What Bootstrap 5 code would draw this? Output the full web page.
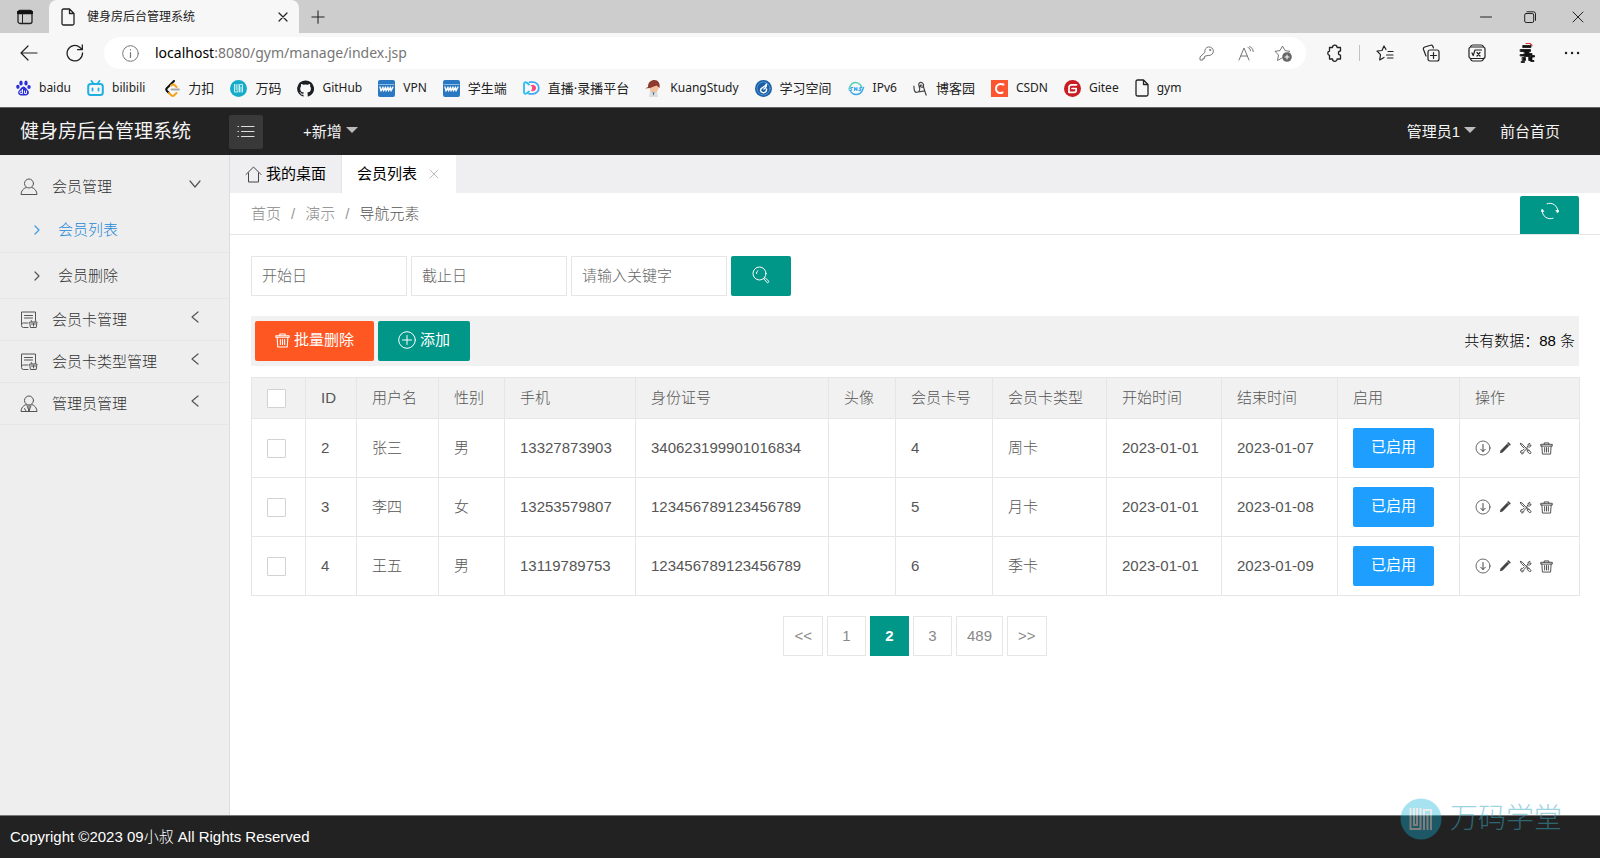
<!DOCTYPE html>
<html lang="zh-CN">
<head>
<meta charset="utf-8">
<meta name="viewport" content="width=device-width, initial-scale=1">
<title>健身房后台管理系统</title>
<link href="https://cdn.jsdelivr.net/npm/bootstrap@5.3.0/dist/css/bootstrap.min.css" rel="stylesheet">
<style>
:root { --teal: #009688; --ink: #222; --line: #e6e6e6; }
body { font: 15px/24px "Liberation Sans", "Noto Sans CJK SC", sans-serif; font-weight: 300; color: #333; background: #fff; }
a { text-decoration: none; color: inherit; }
svg { display: block; flex: none; fill: none; stroke: currentColor; stroke-linecap: round; stroke-linejoin: round; }
button { font-weight: inherit; }
.plain { background: none; border: 0; padding: 0; color: inherit; }

/* browser frame */
.frame { background: #f7f7f7; font-family: "Noto Sans", "Noto Sans CJK SC", sans-serif; font-weight: 400; color: #222; }
.tabstrip { background: #cdcdcd; height: 33px; }
.tabstrip .corner { width: 49px; border-bottom-right-radius: 6px; }
.page-tab { width: 250px; background: #f7f7f7; border-radius: 8px 8px 0 0; font-size: 12px; padding: 0 10px 0 12px; }
.tools { height: 40px; }
.address { background: #fff; border-radius: 16px; height: 32px; margin-left: 20px; padding: 0 14px 0 18px; font-size: 14px; color: #767676; }
.marks { height: 34px; font-size: 12px; padding: 0 16px 4px; gap: 16px; }
.marks a { display: flex; align-items: center; gap: 8px; white-space: nowrap; }
.marks .zh { font-size: 13px; }

/* application bar */
.topbar { background: var(--ink); color: #f4f4f4; height: 48px; border-top: 1px solid #666; font-weight: 400; }
.brand { width: 229px; padding-left: 20px; font-size: 19px; }
.fold { width: 34px; height: 34px; background: #393939; border-radius: 2px; color: #ddd; }
.tri { border: 6px solid transparent; border-top-color: #bbb; border-bottom: 0; margin-bottom: 4px; }

/* side menu */
.side { width: 230px; background: #eee; border-right: 1px solid #ddd; padding-top: 11px; }
.side a { display: flex; align-items: center; height: 42px; padding: 0 30px 0 20px; border-bottom: 1px solid var(--line); }
.side a.open { border: 0; padding-right: 28px; }
.side a.sub { height: 46px; padding-left: 34px; gap: 14px; }
.side a.sub.active { color: #1e88d6; height: 45px; }
.side svg { color: #555; }
.side .active svg { color: #3f9bdc; }
.side .name { margin-left: 14px; }
.side .arrow { margin-left: auto; margin-bottom: 6px; }

/* work area */
.tabs { background: #efeef0; height: 38px; color: #000; font-weight: 400; }
.tabs a { display: flex; align-items: center; padding: 0 15px; border-right: 1px solid #e4e4e6; }
.tabs a.active { background: #fff; border: 0; padding: 0 17px 0 15px; gap: 12px; }
.crumbs { height: 42px; border-bottom: 1px solid #e5e5e5; padding: 0 21px; color: #888; }
.breadcrumb { --bs-breadcrumb-divider-color: #999; --bs-breadcrumb-item-padding-x: 10px; --bs-breadcrumb-item-active-color: #555; }
.crumbs .btn { width: 59px; height: 38px; margin-top: 3px; border-radius: 2px 2px 0 0; padding: 0 0 8px; }
.btn-teal, .btn-teal:hover { background: var(--teal); color: #fff; }
.btn-orange, .btn-orange:hover { background: #ff5722; color: #fff; }
.btn-azure, .btn-azure:hover { background: #1e9fff; color: #fff; }
.act { height: 40px; border: 0; border-radius: 2px; font-size: 15px; font-weight: 400; line-height: 24px; padding: 0 18px 2px; display: inline-flex; align-items: center; justify-content: center; gap: 4px; }
.batch .act { padding: 0 20px 2px; }
.find { width: 60px; }
.work { padding: 21px 21px 0; }
.field { width: 156px; height: 40px; border-radius: 0; border-color: var(--line); font-size: 15px; font-weight: 300; padding: 0 10px 2px; }
.field::placeholder { color: #666; }
.batch { background: #f1f1f1; margin-top: 20px; padding: 5px 4px; color: #000; }
.members { table-layout: fixed; margin: 11px 0 0; color: #666; border-color: var(--line); }
.members > :not(caption) > * > * { padding: 0 15px; vertical-align: middle; color: #555; box-shadow: none; }
.members th { font-weight: 300; height: 41px; background: #f1f1f1; }
.members td { height: 59px; white-space: nowrap; }
.members svg { color: #444; }
.tick { appearance: none; display: block; width: 19px; height: 19px; margin: 0; background: #fff; border: 1px solid #d2d2d2; border-radius: 1px; }
.pager { margin-top: 20px; gap: 4px; }
.pager .page-item .page-link { height: 40px; min-width: 39px; padding: 0 10px; line-height: 38px; text-align: center; font-size: 15px; color: #888; border-color: var(--line); border-radius: 0; margin: 0; }
.pager .page-item.active .page-link { background: var(--teal); border-color: var(--teal); color: #fff; font-weight: 700; }
.foot { background: var(--ink); color: #fff; height: 43px; padding: 0 10px; border-top: 1px solid #777; }
.seal { position: absolute; right: 38px; bottom: 18px; font-size: 28px; line-height: 40px; color: #3aa9c4; opacity: .5; pointer-events: none; }
</style>
</head>
<body class="d-flex flex-column min-vh-100 position-relative">

<svg width="0" height="0" class="position-absolute" aria-hidden="true">
  <symbol id="page" viewBox="0 0 14 18"><path d="M2.500 1h6L13 5.500V15.500a1.500 1.500 0 0 1-1.500 1.500h-9A1.500 1.500 0 0 1 1 15.500v-13A1.500 1.500 0 0 1 2.500 1zM8.500 1v4.500H13" stroke-width="1.300"/></symbol>
  <symbol id="down" viewBox="0 0 16 16"><circle cx="8" cy="8" r="7" stroke-width=".8"/><path d="M8 4.500v7M5.700 9.200L8 11.500l2.300-2.300"/></symbol>
  <symbol id="pen" viewBox="0 0 14 14"><path d="M1 13l.8-3.200L9.500 2l2.400 2.400L4.200 12.200z" fill="currentColor" stroke="none"/><path d="M10.800 1.400l1.700 1.700" stroke-width="2"/></symbol>
  <symbol id="fix" viewBox="0 0 14 14"><path d="M1.500 1.500l2 .8 7 7.500M1.500 1.500l.8 2 3.200 3M8.300 5.700l1.500-1.500c-.4-1.600.6-2.900 2-2.700l-1 1.300.8 1 1.200-.7c.4 1.600-1 2.600-2.400 2.200L5 10.500c.4 1.500-.8 2.700-2.300 2.300l1-1.200-.8-1-1.300.8c-.4-1.700 1-2.800 2.400-2.300l1.300-1.300M9 9.500l1.200-1.200 2.500 2.400c.9 1-.6 2.500-1.600 1.600L8.700 10"/></symbol>
  <symbol id="bin" viewBox="0 0 14 14"><path d="M.8 4V2.500h12.400V4zM4.500 2.300V1h5v1.300M2 4.200l.6 8.800h8.800l.6-8.800M5 6v4.800M7 6v4.800M9 6v4.800"/></symbol>
  <symbol id="card" viewBox="0 0 18 18"><path d="M8 16.500H3.500a2 2 0 0 1-2-2V1h14v8M1.500 13.500c0-1 1-1.500 2-1.500H8M4.500 4.500h8M4.500 7h8"/><path d="M10 11h7l-.8 5.500h-5.400zM12 11l-.7-1.500M15 11l.7-1.500M13.500 12.500v2.500M11.500 13h4"/></symbol>
  <symbol id="left" viewBox="0 0 8 12"><path d="M7 1L1 6l6 5" stroke-width="1.200"/></symbol>
  <symbol id="right" viewBox="0 0 6 10"><path d="M1 1l4 4-4 4" stroke-width="1.200"/></symbol>
  <symbol id="wv" viewBox="0 0 17 17"><rect width="17" height="17" rx="2" fill="#2b78c2" stroke="none"/><path d="M1 4.500h15" stroke="#8fbce5"/><path d="M2 7l1 4 2-4 .5 4 2-4 .5 4 2-4 .5 4 2-4 .5 4 2-4" stroke="#fff" stroke-width="1.300"/></symbol>
</svg>

<header class="frame">
  <div class="tabstrip d-flex">
    <div class="corner d-flex align-items-center justify-content-center">
      <button class="plain" aria-label="标签页菜单"><svg width="16" height="16" viewBox="0 0 16 16"><rect x="1" y="1.500" width="14" height="13" rx="2" stroke-width="1.300"/><path d="M1.500 3.500h13" stroke-width="3.500" stroke="#111"/><path d="M5.500 5v9"/></svg></button>
    </div>
    <div class="page-tab d-flex align-items-center">
      <svg width="14" height="18"><use href="#page"/></svg><span class="ms-2 ps-1">健身房后台管理系统</span>
      <button class="plain ms-auto" aria-label="关闭标签页"><svg width="12" height="12" viewBox="0 0 12 12"><path d="M2 2l8 8M10 2l-8 8" stroke-width="1.200"/></svg></button>
    </div>
    <button class="plain ms-2 ps-1" aria-label="新建标签页"><svg width="14" height="14" viewBox="0 0 16 16"><path d="M8 1v14M1 8h14" stroke-width="1.200"/></svg></button>
    <div class="ms-auto d-flex align-items-center gap-4 pe-3">
      <button class="plain me-2" aria-label="最小化"><svg width="12" height="12" viewBox="0 0 12 12"><path d="M.5 6h11"/></svg></button>
      <button class="plain me-2" aria-label="还原"><svg width="12" height="12" viewBox="0 0 12 12"><rect x=".7" y="2.500" width="9" height="9" rx="1.500"/><path d="M3 .8h6.500a2 2 0 0 1 2 2v6.500"/></svg></button>
      <button class="plain ms-1" aria-label="关闭"><svg width="12" height="12" viewBox="0 0 12 12"><path d="M1 1l10 10M11 1L1 11"/></svg></button>
    </div>
  </div>
  <div class="tools d-flex align-items-center">
    <button class="plain ms-3 ps-1" aria-label="后退"><svg width="18" height="16" viewBox="0 0 18 16"><path d="M17 8H1.500M8 1L1 8l7 7" stroke-width="1.200"/></svg></button>
    <button class="plain ms-4 ps-1" aria-label="刷新"><svg width="18" height="18" viewBox="0 0 18 18"><path d="M16.500 9a7.700 7.700 0 1 1-2.600-5.600L16 5.500M16.300 1v4.700h-4.700" stroke-width="1.300"/></svg></button>
    <form class="address d-flex align-items-center flex-grow-1">
      <svg width="17" height="17" viewBox="0 0 17 17"><circle cx="8.500" cy="8.500" r="7.800"/><path d="M8.500 7.500v5M8.500 4.700v.2" stroke-width="1.200"/></svg>
      <span class="ms-3 flex-grow-1"><span class="text-black">localhost</span>:8080/gym/manage/index.jsp</span>
      <svg width="15" height="15" viewBox="0 0 15 15"><path d="M9.500 9.500a4.300 4.300 0 1 0-3.600-3.200L1 11v3h3v-1.700h1.700v-1.700z"/><circle cx="11" cy="4" r=".6"/></svg>
      <svg class="ms-4" width="16" height="15" viewBox="0 0 16 15"><path d="M1 14L6 2l5 12M2.800 10h6.400M10 1.500c1.500.5 2.500 1.700 2.500 3.300M11.500.6c2.200.7 3.700 2.500 3.700 5"/></svg>
      <svg class="ms-3 ps-1" width="22" height="18" viewBox="0 0 18 18"><path d="M8 14l-4.500 2.500L4.500 11 1 7.300l5-.7L8.500 2 11 6.600l5 .7-1.500 1.500"/><circle cx="13" cy="13" r="4.800" fill="#666" stroke="none"/><path d="M13 11v4M11 13h4" stroke="#fff"/></svg>
    </form>
    <div class="d-flex align-items-center gap-4 ps-3 pe-3">
      <div class="d-flex align-items-center gap-3 ps-1">
        <svg width="17" height="18" viewBox="0 0 17 18"><path d="M3.500 3.500h3a2.300 2.300 0 0 1 4.600 0h3.400V7a2.100 2.100 0 0 0 0 4.200V15h-3.400a2.300 2.300 0 0 1-4.600 0h-3V11.300a2.200 2.200 0 0 1 0-4.300z" stroke-width="1.300"/></svg>
        <span class="vr align-self-center py-2"></span>
        <svg width="18" height="16" viewBox="0 0 18 16"><path d="M10 4.500L8 1 6 5.500 1 6l3.500 3.700L3.700 15 8 12.500M12 6.500h5M10.500 10H17M11.500 13H17" stroke-width="1.200"/></svg>
      </div>
      <svg class="ms-1" width="18" height="18" viewBox="0 0 18 18"><rect x="6" y="6" width="11" height="11" rx="2" stroke-width="1.200"/><path d="M11.500 8.500v6M8.500 11.500h6M4 12L1.500 5.500A2 2 0 0 1 2.800 3L8.500 1.300A2 2 0 0 1 11 2.500l.4 1.500" stroke-width="1.200"/></svg>
      <svg class="ms-1" width="18" height="18" viewBox="0 0 18 18"><rect x="1" y="3" width="16" height="11.500" rx="2" stroke-width="1.200"/><path d="M2.500 2.500C3 1.500 4 1 5 1h8c1 0 2 .5 2.500 1.500M2.500 15c.5 1.300 1.500 2 2.500 2h8c1 0 2-.7 2.500-2M4 9l1.200 2.500L7 6h6.500M9 8.500l3 3.500M12 8.500L9 12" stroke-width="1.200"/></svg>
      <svg class="ms-2" width="18" height="22" viewBox="0 0 18 22"><path d="M5 3.500h8v2H5zM2.500 7.500h10v2h-10zM6.500 9.500h4.500v5H6.500zM11 11.500h3v2h-3zM14 13.500h2.500v1.500H14zM2.500 12.500h4v1.500h-4zM4.500 15.500h3v3h-3zM11 14.500h3v4h-3zM13 18.500h3v1h-3zM3.500 19.500h3v1h-3z" fill="#111" stroke="#111" stroke-width=".8"/><path d="M8 1.500h4l2 2" stroke="#d33" stroke-width="1.200"/></svg>
      <svg class="ms-1 me-1" width="16" height="6" viewBox="0 0 16 6"><path d="M2 3h.1M8 3h.1M14 3h.1" stroke-width="2.400"/></svg>
    </div>
  </div>
  <nav class="marks d-flex align-items-center" aria-label="书签">
    <a href="#"><svg width="15" height="16" viewBox="0 0 15 16"><g fill="#2b2fd6" stroke="none"><ellipse cx="5" cy="3" rx="1.700" ry="2.500"/><ellipse cx="10" cy="3" rx="1.700" ry="2.500"/><ellipse cx="1.900" cy="6.800" rx="1.700" ry="2.100"/><ellipse cx="13" cy="7" rx="1.700" ry="2.100"/><path d="M7.500 6.500c2 0 3 2.500 4.500 4 2.500 3-.5 5.500-4.500 5-4 .5-7-2-4.500-5 1.500-1.500 2.500-4 4.500-4z"/></g><path d="M6.500 9.500v4H5a1.200 1.200 0 0 1 0-2.500h1.500M8.500 11v2.500h2V11" stroke="#fff" stroke-width=".9"/></svg>baidu</a>
    <a href="#"><svg width="17" height="16" viewBox="0 0 17 16"><rect x="1.200" y="4" width="14.600" height="11" rx="2.500" stroke="#20b0e3" stroke-width="2"/><path d="M4.500 1l2 2.500M12.500 1l-2 2.500M5.500 8.500v2M11.500 8.500v2" stroke="#20b0e3" stroke-width="1.800"/></svg>bilibili</a>
    <a href="#" class="zh ps-1"><svg width="15" height="17" viewBox="0 0 15 17"><path d="M9 1L2 8c-1 1-1 2 0 3l2 2" stroke="#111" stroke-width="2"/><path d="M4 13l2 2c1 1 2.500 1 3.500 0l2-2M6 5.500c1.500-1.200 3-1.200 4 0l1.500 1.500" stroke="#f5a31b" stroke-width="2"/><path d="M6.500 9.500H14" stroke="#aaa" stroke-width="1.800"/></svg>力扣</a>
    <a href="#" class="zh"><svg width="17" height="17" viewBox="0 0 17 17"><circle cx="8.500" cy="8.500" r="8.500" fill="#16acc9" stroke="none"/><path d="M4.500 4.500v7.500H8V4.500M6.200 4.500V10M9.500 12V4.500h3V12M11 7v5" stroke="#d9f5fa" stroke-width=".9"/></svg>万码</a>
    <a href="#"><svg width="17" height="17" viewBox="0 0 17 17"><path fill="#1b1f23" stroke="none" d="M8.500.4a8.300 8.300 0 0 0-2.600 16.200c.4.100.6-.2.600-.4v-1.500c-2.300.5-2.800-1-2.800-1-.4-1-.9-1.200-.9-1.200-.8-.5 0-.5 0-.5.800.1 1.300.9 1.300.9.700 1.200 1.900.9 2.400.7.100-.6.300-.9.500-1.100-1.800-.2-3.800-.9-3.800-4.100 0-.9.300-1.700.9-2.200-.1-.3-.4-1.100.1-2.200 0 0 .7-.3 2.300.8a8 8 0 0 1 4.100 0c1.600-1.100 2.300-.8 2.300-.8.500 1.100.2 1.900.1 2.200.6.500.9 1.300.9 2.200 0 3.200-2 3.900-3.800 4.100.3.300.6.700.6 1.500v2.200c0 .2.100.5.600.4A8.300 8.300 0 0 0 8.500.4z"/></svg>GitHub</a>
    <a href="#"><svg width="17" height="17"><use href="#wv"/></svg>VPN</a>
    <a href="#" class="zh"><svg width="17" height="17"><use href="#wv"/></svg>学生端</a>
    <a href="#" class="zh"><svg width="17" height="14" viewBox="0 0 17 14"><path d="M6 3.500L3.500 1.500C2 .7 1 1.500 1 3v8c0 1.500 1 2.300 2.500 1.500L6 10.500" stroke="#28bdf2" stroke-width="1.800"/><path d="M6.500 1.200H10a5.800 5.800 0 0 1 0 11.600H6" stroke="#3fa9f5" stroke-width="1.800"/><path d="M8.500 4.500C11 3.500 12.500 5 12.500 7S11 10.500 8.500 9.500C10 8 10 6 8.500 4.500z" fill="#f4497d" stroke="#f4497d"/></svg>直播·录播平台</a>
    <a href="#"><svg width="17" height="17" viewBox="0 0 17 17"><g stroke="none"><path d="M5 11h7l1 6H4z" fill="#ddd"/><path d="M7.500 12h2l-1 4z" fill="#3a6ea5"/><circle cx="9" cy="8" r="4.500" fill="#f0c0a0"/><path d="M3 7C3 2 6 0 9.500 0S15.500 3 14.500 8l-3-2.500L5 8 0 8.500z" fill="#8c3a2e"/></g></svg>KuangStudy</a>
    <a href="#" class="zh"><svg width="17" height="17" viewBox="0 0 17 17"><circle cx="8.500" cy="8.500" r="8.500" fill="#1a5fa8" stroke="none"/><path d="M5.500 10.500c0-4 4-2 6-6.500 0 3-1 4-2.500 5M6 11.500c2.500 2.500 6 .5 5.500-2.500" stroke="#fff" stroke-width="1.500"/><circle cx="8.500" cy="8.500" r="6.500" stroke="#7db1e3" stroke-width=".6"/></svg>学习空间</a>
    <a href="#"><svg width="17" height="15" viewBox="0 0 18 15"><path d="M1 8C2 3 6 0 10 1.500c3 1 4 3 4.500 4.500" stroke="#4fd0b0" stroke-width="1.500"/><path d="M3 11c3 4 9 4 12-1 .7-1.500 1-3 1.500-3.500" stroke="#3aa7ec" stroke-width="1.500"/><path d="M1.500 9.500c2 .6 3-1 1.800-1.500S3.500 6 5 6.500M7 9.500v-3l2.500 3v-3M14.500 6.500c-2-.4-2.500 1-1.300 1.500s0 1.800-1.700 1.500" stroke="#3aa7ec" stroke-width="1.300"/></svg>IPv6</a>
    <a href="#" class="zh"><svg width="15" height="17" viewBox="0 0 16 17"><path d="M1 6c0 5 1 7 3.500 6.500C7 12 8 9 6.500 6.500M6.500 6C5 2.500 8 1 10 2.500c2.500 2 1 5-1 4.500-2.500-.5-1-3 .5-2M11 6l1.500 5 1.500 4.500M4 12.500l8.500-1.500" stroke="#444" stroke-width="1.300"/></svg>博客园</a>
    <a href="#"><svg width="17" height="17" viewBox="0 0 17 17"><rect width="17" height="17" fill="#fc5531" stroke="none"/><path d="M12.500 4.500C9 3 5.500 4.500 5 8c-.5 4 3.500 6 6.500 4.500" stroke="#fff" stroke-width="2"/></svg>CSDN</a>
    <a href="#"><svg width="17" height="17" viewBox="0 0 17 17"><circle cx="8.500" cy="8.500" r="8.500" fill="#c71d23" stroke="none"/><path d="M12.500 4.800H7.500A2.500 2.500 0 0 0 5 7.300v5h5.200a2 2 0 0 0 2-2V8.500H8" stroke="#fff" stroke-width="1.700"/></svg>Gitee</a>
    <a href="#"><svg width="14" height="18"><use href="#page"/></svg>gym</a>
  </nav>
</header>

<header class="topbar d-flex align-items-center">
  <div class="brand">健身房后台管理系统</div>
  <button class="fold plain d-flex align-items-center justify-content-center" aria-label="收起菜单"><svg width="18" height="13" viewBox="0 0 18 13"><path d="M4.500 1.500H17M4.500 6.500H17M4.500 11.500H17M1 1.500h.5M1 6.500h.5M1 11.500h.5" stroke-width="1.200"/></svg></button>
  <button class="plain d-flex align-items-center ms-4 ps-3 gap-1" aria-haspopup="menu"><span>+新增</span><span class="tri"></span></button>
  <button class="plain d-flex align-items-center ms-auto gap-1" aria-haspopup="menu"><span>管理员1</span><span class="tri"></span></button>
  <a href="#" class="ms-4 me-4 pe-3">前台首页</a>
</header>

<div class="d-flex flex-grow-1">
  <nav class="side flex-shrink-0" aria-label="主菜单">
    <a href="#" class="open"><svg width="18" height="18" viewBox="0 0 18 18"><circle cx="9" cy="5.500" r="4.500"/><path d="M6 9.500c-3 1-4.800 3.500-5 7h16c-.2-3.500-2-6-5-7"/></svg><span class="name">会员管理</span><svg class="arrow" width="12" height="8" viewBox="0 0 12 8"><path d="M1 1l5 6 5-6" stroke-width="1.200"/></svg></a>
    <a href="#" class="sub active"><svg width="6" height="10"><use href="#right"/></svg><span class="ms-1">会员列表</span></a>
    <a href="#" class="sub"><svg width="6" height="10"><use href="#right"/></svg><span class="ms-1">会员删除</span></a>
    <a href="#"><svg width="18" height="18"><use href="#card"/></svg><span class="name">会员卡管理</span><svg class="arrow" width="8" height="12"><use href="#left"/></svg></a>
    <a href="#"><svg width="18" height="18"><use href="#card"/></svg><span class="name">会员卡类型管理</span><svg class="arrow" width="8" height="12"><use href="#left"/></svg></a>
    <a href="#"><svg width="18" height="18" viewBox="0 0 18 18"><circle cx="9" cy="5.500" r="4.500"/><path d="M6 9.500c-3 1-4.800 3.500-5 7h16c-.2-3.500-2-6-5-7M7 10.500l2 5.500 2-5.500M9 10.500V16M4.500 13.500L6 16"/></svg><span class="name">管理员管理</span><svg class="arrow" width="8" height="12"><use href="#left"/></svg></a>
  </nav>

  <main class="flex-grow-1 overflow-hidden">
    <div class="tabs d-flex">
      <a href="#"><svg class="me-1" width="17" height="17" viewBox="0 0 17 17" color="#444"><path d="M1 8.500L8.500 1 16 8.500M3.500 7v9h10V7"/></svg>我的桌面</a>
      <a href="#" class="active">会员列表<svg width="10" height="10" viewBox="0 0 10 10" color="#bbb"><path d="M1 1l8 8M9 1L1 9"/></svg></a>
    </div>
    <div class="crumbs d-flex justify-content-between">
      <ol class="breadcrumb mb-0 align-items-center">
        <li class="breadcrumb-item"><a href="#">首页</a></li>
        <li class="breadcrumb-item"><a href="#">演示</a></li>
        <li class="breadcrumb-item active">导航元素</li>
      </ol>
      <button class="btn btn-teal border-0 d-flex align-items-center justify-content-center" aria-label="刷新"><svg width="18" height="18" viewBox="0 0 18 18"><path d="M6 1.800A7.800 7.800 0 0 1 16.800 9.500M12 16.200A7.800 7.800 0 0 1 1.200 8.500"/><path d="M15 8.500h3l-1.300 2.200zM0 9.500h3L1.300 7.300z" fill="currentColor" stroke-width=".6"/></svg></button>
    </div>

    <div class="work">
      <form class="d-flex gap-1">
        <input class="form-control field" type="text" placeholder="开始日" aria-label="开始日">
        <input class="form-control field" type="text" placeholder="截止日" aria-label="截止日">
        <input class="form-control field" type="text" placeholder="请输入关键字" aria-label="关键字">
        <button type="button" class="btn btn-teal act find" aria-label="搜索"><svg width="18" height="18" viewBox="0 0 18 18"><circle cx="7.500" cy="7.500" r="6.500"/><path d="M4.500 7.500a3 3 0 0 1 1.500-3M12 12.500l1-1 4 4-1.200 1.200z"/></svg></button>
      </form>

      <div class="batch d-flex align-items-center gap-1">
        <button class="btn btn-orange act"><svg width="15" height="15"><use href="#bin"/></svg>批量删除</button>
        <button class="btn btn-teal act"><svg width="18" height="18" viewBox="0 0 18 18"><circle cx="9" cy="9" r="8.300"/><path d="M9 4.500v9M4.500 9h9"/></svg>添加</button>
        <span class="ms-auto">共有数据：88 条</span>
      </div>

      <table class="table table-bordered members">
        <colgroup><col width="54"><col width="51"><col width="82"><col width="66"><col width="131"><col width="193"><col width="67"><col width="97"><col width="114"><col width="115"><col width="116"><col width="122"><col width="120"></colgroup>
        <thead><tr>
          <th><input class="tick" type="checkbox" aria-label="全选"></th><th>ID</th><th>用户名</th><th>性别</th><th>手机</th><th>身份证号</th><th>头像</th><th>会员卡号</th><th>会员卡类型</th><th>开始时间</th><th>结束时间</th><th>启用</th><th>操作</th>
        </tr></thead>
        <tbody>
          <tr><td><input class="tick" type="checkbox" aria-label="选择张三"></td><td>2</td><td>张三</td><td>男</td><td>13327873903</td><td>340623199901016834</td><td></td><td>4</td><td>周卡</td><td>2023-01-01</td><td>2023-01-07</td><td><button class="btn btn-azure act">已启用</button></td>
            <td><div class="d-flex align-items-center gap-2"><a href="#" aria-label="停用"><svg width="16" height="16"><use href="#down"/></svg></a><a href="#" aria-label="编辑"><svg width="12" height="12"><use href="#pen"/></svg></a><a href="#" aria-label="改密"><svg width="13" height="13"><use href="#fix"/></svg></a><a href="#" aria-label="删除"><svg width="13" height="13"><use href="#bin"/></svg></a></div></td></tr>
          <tr><td><input class="tick" type="checkbox" aria-label="选择李四"></td><td>3</td><td>李四</td><td>女</td><td>13253579807</td><td>123456789123456789</td><td></td><td>5</td><td>月卡</td><td>2023-01-01</td><td>2023-01-08</td><td><button class="btn btn-azure act">已启用</button></td>
            <td><div class="d-flex align-items-center gap-2"><a href="#" aria-label="停用"><svg width="16" height="16"><use href="#down"/></svg></a><a href="#" aria-label="编辑"><svg width="12" height="12"><use href="#pen"/></svg></a><a href="#" aria-label="改密"><svg width="13" height="13"><use href="#fix"/></svg></a><a href="#" aria-label="删除"><svg width="13" height="13"><use href="#bin"/></svg></a></div></td></tr>
          <tr><td><input class="tick" type="checkbox" aria-label="选择王五"></td><td>4</td><td>王五</td><td>男</td><td>13119789753</td><td>123456789123456789</td><td></td><td>6</td><td>季卡</td><td>2023-01-01</td><td>2023-01-09</td><td><button class="btn btn-azure act">已启用</button></td>
            <td><div class="d-flex align-items-center gap-2"><a href="#" aria-label="停用"><svg width="16" height="16"><use href="#down"/></svg></a><a href="#" aria-label="编辑"><svg width="12" height="12"><use href="#pen"/></svg></a><a href="#" aria-label="改密"><svg width="13" height="13"><use href="#fix"/></svg></a><a href="#" aria-label="删除"><svg width="13" height="13"><use href="#bin"/></svg></a></div></td></tr>
        </tbody>
      </table>

      <nav aria-label="分页">
        <ul class="pagination pager justify-content-center mb-3">
          <li class="page-item"><a class="page-link" href="#">&lt;&lt;</a></li>
          <li class="page-item"><a class="page-link" href="#">1</a></li>
          <li class="page-item active"><a class="page-link" href="#" aria-current="page">2</a></li>
          <li class="page-item"><a class="page-link" href="#">3</a></li>
          <li class="page-item"><a class="page-link" href="#">489</a></li>
          <li class="page-item"><a class="page-link" href="#">&gt;&gt;</a></li>
        </ul>
      </nav>
    </div>
  </main>
</div>

<footer class="foot d-flex align-items-center">Copyright ©2023 09小叔 All Rights Reserved</footer>
<div class="seal d-flex align-items-center gap-2"><svg width="42" height="42" viewBox="0 0 42 42"><circle cx="21" cy="21" r="20.500" fill="#18b4d8" fill-opacity=".75" stroke="none"/><path d="M10.500 10v21h10V10M14 10v17h3V10M24 32V12h7v20M27.500 16v16" stroke="#d9d9d9" stroke-width="2" stroke-linecap="butt" stroke-linejoin="miter"/></svg><span>万码学堂</span></div>

<script src="https://cdn.jsdelivr.net/npm/bootstrap@5.3.0/dist/js/bootstrap.bundle.min.js"></script>
</body>
</html>
